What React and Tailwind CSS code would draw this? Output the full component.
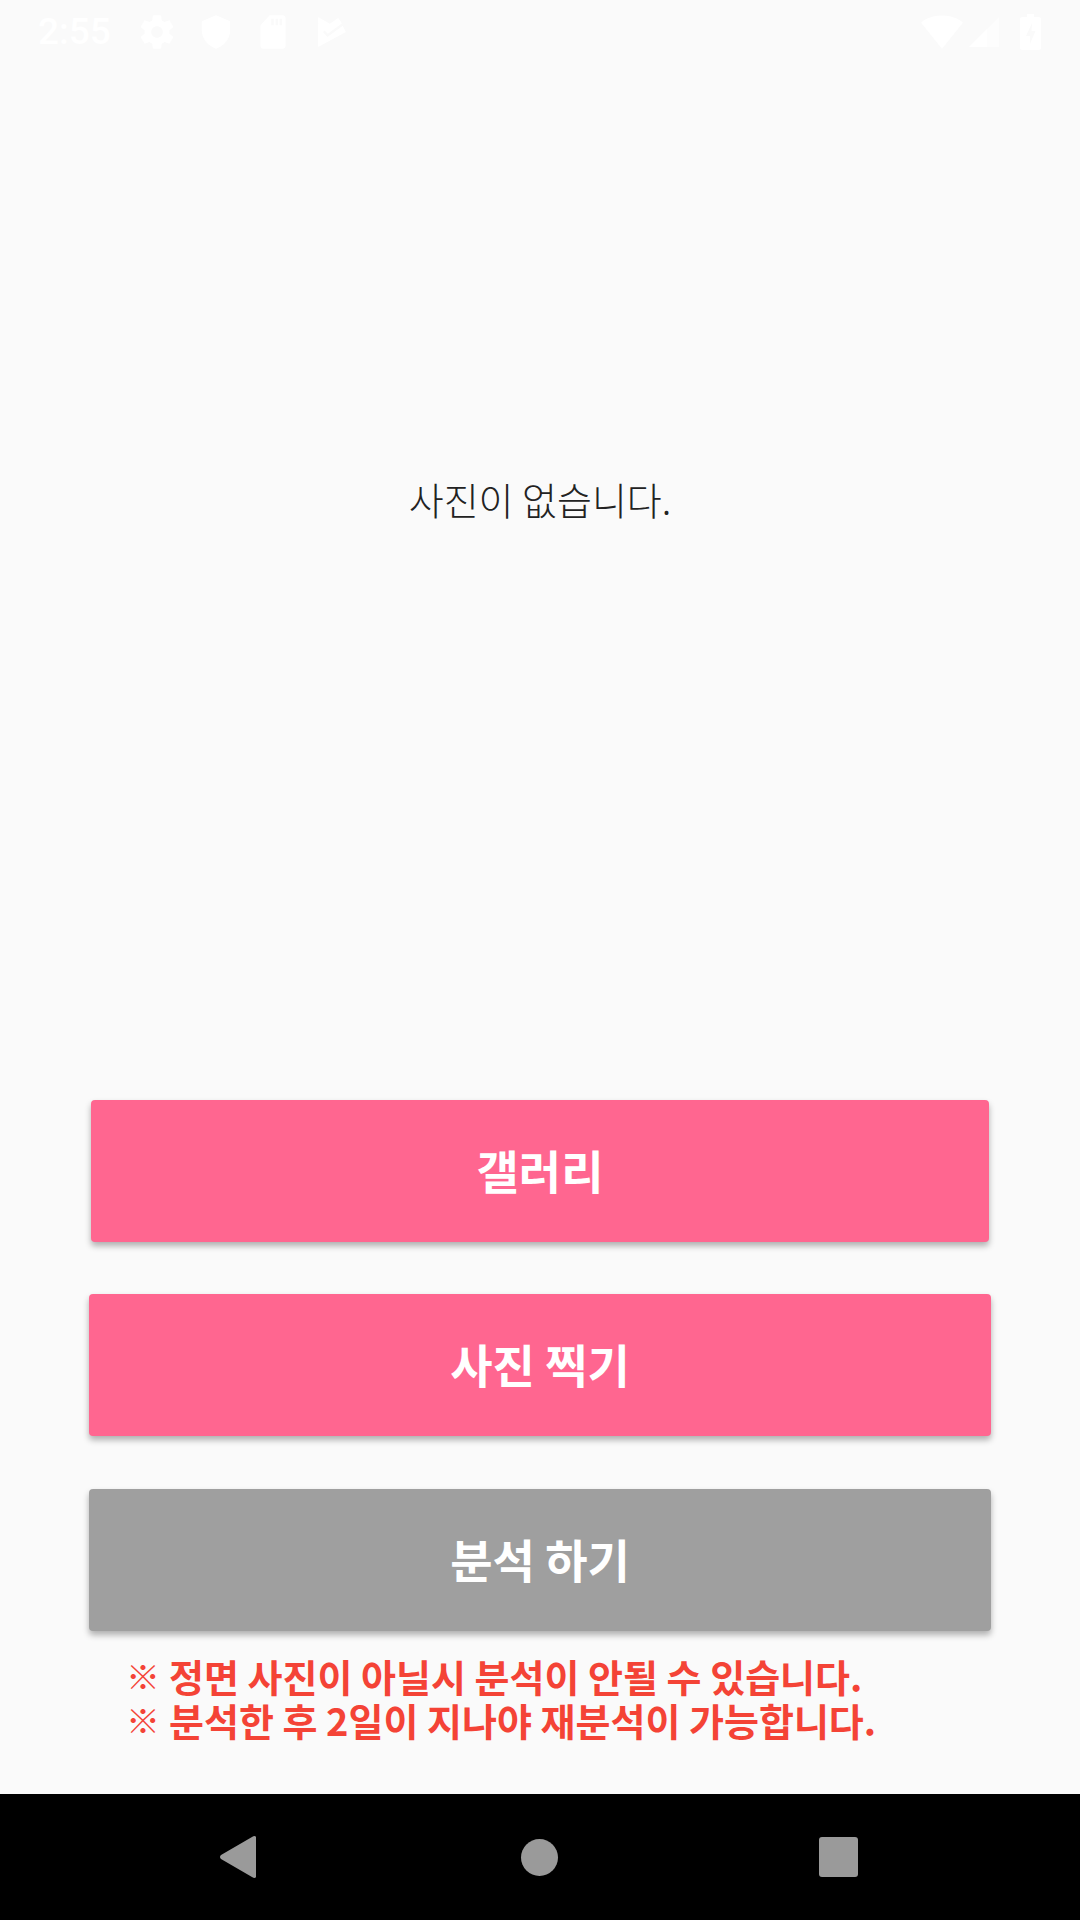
import React from 'react';

const KR = { fontFamily: '"Noto Sans CJK KR", sans-serif' };

const StatusBar = () => (
  <div className="h-[63px] flex items-center justify-between text-white shrink-0">
    <div className="flex items-center pl-[38px]">
      <span className="w-[72px] text-[37px] leading-none font-medium" style={{ fontFamily: 'Roboto, sans-serif' }}>2:55</span>
      <svg className="ml-[27px]" width="40" height="40" viewBox="0 0 24 24" fill="currentColor">
        <path d="M19.43 12.98c.04-.32.07-.64.07-.98s-.03-.66-.07-.98l2.11-1.65c.19-.15.24-.42.12-.64l-2-3.46c-.12-.22-.39-.3-.61-.22l-2.49 1c-.52-.4-1.08-.73-1.69-.98l-.38-2.65C14.46 2.18 14.25 2 14 2h-4c-.25 0-.46.18-.49.42l-.38 2.65c-.61.25-1.17.59-1.69.98l-2.49-1c-.23-.09-.49 0-.61.22l-2 3.46c-.13.22-.07.49.12.64l2.11 1.65c-.04.32-.07.65-.07.98s.03.66.07.98l-2.11 1.65c-.19.15-.24.42-.12.64l2 3.46c.12.22.39.3.61.22l2.49-1c.52.4 1.08.73 1.69.98l.38 2.65c.03.24.24.42.49.42h4c.25 0 .46-.18.49-.42l.38-2.65c.61-.25 1.17-.59 1.69-.98l2.49 1c.23.09.49 0 .61-.22l2-3.46c.12-.22.07-.49-.12-.64l-2.11-1.65zM12 15.5c-1.93 0-3.5-1.57-3.5-3.5s1.57-3.5 3.5-3.5 3.5 1.57 3.5 3.5-1.57 3.5-3.5 3.5z" />
      </svg>
      <svg className="ml-[19px]" width="40" height="40" viewBox="0 0 24 24" fill="currentColor">
        <path d="M12 2 L20.5 5.5 V11 C20.5 16.5 16.5 20.7 12 22 C7.5 20.7 3.5 16.5 3.5 11 V5.5 Z" />
      </svg>
      <svg className="ml-[17px]" width="40" height="40" viewBox="0 0 24 24" fill="currentColor">
        <path fillRule="evenodd" d="M18 2h-8L4.500 8v12.500c0 .8.700 1.500 1.500 1.500h12c.800 0 1.500-.700 1.500-1.500v-17C19.500 2.700 18.800 2 18 2zM11 4h1.500v4H11zM13.500 4H15v4h-1.500zM16 4h1.500v4H16z" />
      </svg>
      {/* play protect style mark */}
      <svg className="ml-[25px]" width="28" height="30" viewBox="205 35 83 90">
        <path d="M205 35 L240 55 L265 38 L272 47 L288 80 L205 125 Z" fill="currentColor" />
        <polyline points="222,78 233,90 280,56" fill="none" stroke="#fafafa" strokeWidth="7" />
      </svg>
    </div>
    <div className="flex items-center pr-[39px]">
      <svg width="44" height="44" viewBox="0 0 24 24" fill="currentColor">
        <path d="M12.300 20.800 23.200 7.200c.2-.2.100-.5-.1-.7C22.500 6 18.300 3 12 3S1.500 6 .900 6.500c-.2.200-.3.500-.1.700l10.900 13.600c.2.200.4.200.6 0z" />
      </svg>
      <svg className="ml-[3px]" width="34" height="34" viewBox="0 0 34 34">
        <path d="M32 2 V32 H2 Z" fill="currentColor" fillOpacity="0.55" />
        <path d="M20 14 V32 H2 Z" fill="currentColor" />
      </svg>
      <svg className="ml-[19px]" width="21" height="36" viewBox="0 0 21 36" fill="currentColor">
        <path fillRule="evenodd" d="M7 0h7v3h5c1 0 2 .8 2 2v29c0 1-1 2-2 2H2c-1 0-2-1-2-2V5c0-1.200 1-2 2-2h5zM12 9l-6 13h4v8l5.500-13H11.500z" />
      </svg>
    </div>
  </div>
);

const ActionButton = ({ label, className }) => (
  <button
    className={`h-[142px] pb-[3px] rounded-[4px] text-white text-[46px] font-bold flex items-center justify-center shadow-[0_4px_6px_rgba(0,0,0,0.3)] ${className}`}
    style={KR}
  >
    {label}
  </button>
);

const Note = ({ children }) => (
  <div className="flex">
    <span className="w-[43px] shrink-0 text-[34px] font-black">※</span>
    <span>{children}</span>
  </div>
);

const NavBar = () => (
  <div className="h-[126px] bg-black flex items-center justify-between pl-[219px] pr-[222px] shrink-0">
    <svg width="40" height="44" viewBox="0 0 40 44" fill="#9a9a9a">
      <path d="M37 2 V42 Q36 44 33 42 L2 24 Q0 22 2 20 L33 2 Q36 0 37 2 Z" />
    </svg>
    <div className="w-[37px] h-[37px] rounded-full bg-[#9a9a9a]" />
    <div className="w-[39px] h-[40px] rounded-[3px] bg-[#9a9a9a]" />
  </div>
);

export default function App() {
  return (
    <div className="w-[1080px] h-[1920px] bg-[#fafafa] flex flex-col overflow-hidden">
      <StatusBar />
      <div className="flex-1 flex flex-col">
        <div className="h-[871px] flex items-center justify-center text-[38px] text-[#222222] font-light" style={KR}>
          사진이 없습니다.
        </div>
        <div className="flex flex-col items-center mt-[166px]">
          <ActionButton label="갤러리" className="w-[898px] bg-[#ff6690]" />
          <ActionButton label="사진 찍기" className="w-[902px] mt-[52px] bg-[#ff6690]" />
          <ActionButton label="분석 하기" className="w-[902px] mt-[53px] bg-[#9f9f9f]" />
        </div>
        <div className="pl-[126px] mt-[23px] text-[38px] leading-[44px] font-bold text-[#f44336]" style={KR}>
          <Note>정면 사진이 아닐시 분석이 안될 수 있습니다.</Note>
          <Note>분석한 후 2일이 지나야 재분석이 가능합니다.</Note>
        </div>
      </div>
      <NavBar />
    </div>
  );
}
